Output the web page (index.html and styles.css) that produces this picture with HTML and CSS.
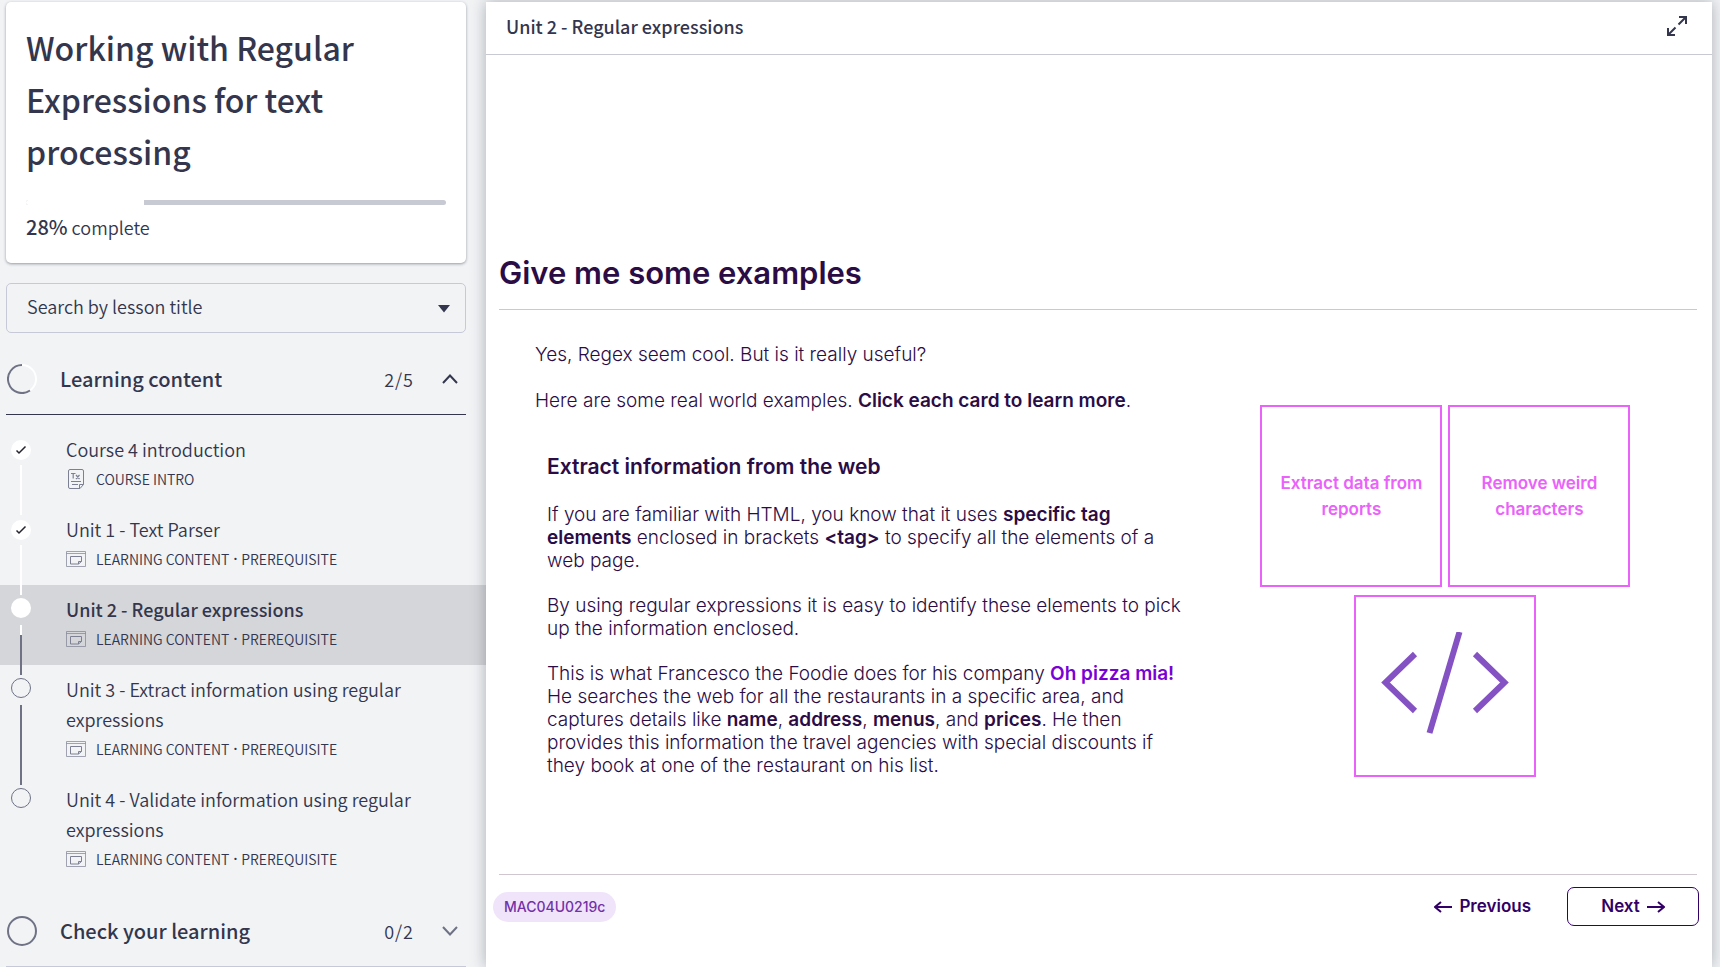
FILE: index.html
```html
<!DOCTYPE html>
<html lang="en">
<head>
<meta charset="utf-8">
<meta name="viewport" content="width=device-width, initial-scale=1">
<title>Working with Regular Expressions for text processing</title>
<link rel="stylesheet" href="styles.css">
</head>
<body>
<svg class="sprite" aria-hidden="true">
  <symbol id="window" viewBox="0 0 20 20">
    <g fill="none" stroke="currentColor"><path d="M.5 2.500h19v15H.5zM.5 4.500h19" opacity=".7"/><path d="M4.500 7.500h11v5l-3 2.500h-8zM12.500 15v-2.500h3"/></g>
  </symbol>
  <symbol id="check" viewBox="0 0 20 20"><path d="M5.500 10.500l2.500 2.500 6.500-6.500" fill="none" stroke="#23242e" stroke-width="1.500"/></symbol>
</svg>
<div class="app">
  <aside class="sidebar">
    <section class="course">
      <h1 class="course-title">Working with Regular Expressions for text processing</h1>
      <div class="progress" role="progressbar" aria-label="Course progress" aria-valuenow="28" aria-valuemin="0" aria-valuemax="100"><div class="progress-done" style="width:28%"></div></div>
      <p class="progress-text"><b>28%</b> complete</p>
    </section>

    <div class="search">
      <select class="search-select" aria-label="Search by lesson title"><option>Search by lesson title</option></select>
      <svg class="search-caret" viewBox="0 0 12 8" aria-hidden="true"><path d="M0 0h12L6 7.500z" fill="#33364d"/></svg>
    </div>

    <button class="section open" type="button" aria-expanded="true">
      <svg class="ring" viewBox="0 0 30 30" aria-hidden="true"><circle cx="15" cy="15" r="14" fill="none" stroke="#fff" stroke-width="2"/><path d="M23 26.500A14 14 0 1 1 15 1" fill="none" stroke="#6f7285" stroke-width="2"/></svg>
      <span class="section-name">Learning content</span>
      <span class="section-count">2/5</span>
      <svg class="chevron" viewBox="0 0 16 16" aria-hidden="true"><path d="M1 12l7-7.500 7 7.500" fill="none" stroke="#33364d" stroke-width="2"/></svg>
    </button>

    <ol class="lessons">
      <li class="lesson">
        <span class="rail done"><svg class="dot"><use href="#check"/></svg><i class="line white"></i></span>
        <div class="lesson-body">
          <a class="lesson-title" href="#intro">Course 4 introduction</a>
          <p class="meta"><svg class="meta-icon" viewBox="0 0 20 20" aria-hidden="true"><g fill="none" stroke="currentColor"><path d="M4 .5h12q1.500 0 1.500 1.500v13.500l-3.500 4H4q-1.500 0-1.500-1.500V2Q2.500.5 4 .5zM13.500 19.500v-4h4"/><path d="M5 12.500h10M6 15.500h6M5 4.500h4.500M7.200 4.500v5M10 6l3.500 4M13.500 6L10 10" stroke-width="1.200"/></g></svg>COURSE INTRO</p>
        </div>
      </li>
      <li class="lesson">
        <span class="rail done"><svg class="dot"><use href="#check"/></svg><i class="line white"></i></span>
        <div class="lesson-body">
          <a class="lesson-title" href="#unit1">Unit 1 - Text Parser</a>
          <p class="meta"><svg class="meta-icon"><use href="#window"/></svg>LEARNING CONTENT<span class="sep">·</span>PREREQUISITE</p>
        </div>
      </li>
      <li class="lesson current">
        <span class="rail"><i class="dot"></i><i class="line part"></i></span>
        <div class="lesson-body">
          <a class="lesson-title" href="#unit2" aria-current="page">Unit 2 - Regular expressions</a>
          <p class="meta"><svg class="meta-icon"><use href="#window"/></svg>LEARNING CONTENT<span class="sep">·</span>PREREQUISITE</p>
        </div>
      </li>
      <li class="lesson">
        <span class="rail todo"><i class="dot"></i><i class="line"></i></span>
        <div class="lesson-body">
          <a class="lesson-title" href="#unit3">Unit 3 - Extract information using regular expressions</a>
          <p class="meta"><svg class="meta-icon"><use href="#window"/></svg>LEARNING CONTENT<span class="sep">·</span>PREREQUISITE</p>
        </div>
      </li>
      <li class="lesson">
        <span class="rail todo"><i class="dot"></i></span>
        <div class="lesson-body">
          <a class="lesson-title" href="#unit4">Unit 4 - Validate information using regular expressions</a>
          <p class="meta"><svg class="meta-icon"><use href="#window"/></svg>LEARNING CONTENT<span class="sep">·</span>PREREQUISITE</p>
        </div>
      </li>
    </ol>

    <button class="section" type="button" aria-expanded="false">
      <svg class="ring" viewBox="0 0 30 30" aria-hidden="true"><circle cx="15" cy="15" r="14" fill="none" stroke="#6f7285" stroke-width="2"/></svg>
      <span class="section-name">Check your learning</span>
      <span class="section-count">0/2</span>
      <svg class="chevron" viewBox="0 0 16 16" aria-hidden="true"><path d="M1 4l7 7.500L15 4" fill="none" stroke="#6f7285" stroke-width="2"/></svg>
    </button>
  </aside>

  <main class="player">
    <header class="player-bar">
      <h2 class="player-title">Unit 2 - Regular expressions</h2>
      <button class="expand" type="button" aria-label="Full screen"><svg viewBox="0 0 20 20" aria-hidden="true"><path d="M12 1h7v7M18.500 1.500l-7 7M8 19H1v-7M1.500 18.500l7-7" fill="none" stroke="#33364d" stroke-width="2"/></svg></button>
    </header>
    <article class="slide">
      <h2 class="slide-title">Give me some examples</h2>
      <div class="columns">
        <div class="copy">
          <p>Yes, Regex seem cool. But is it really useful?</p>
          <p>Here are some real world examples. <b>Click each card to learn more</b>.</p>
          <section class="detail">
            <h3 class="detail-title">Extract information from the web</h3>
            <p>If you are familiar with HTML, you know that it uses <b>specific tag elements</b> enclosed in brackets <b>&lt;tag&gt;</b> to specify all the elements of a web page.</p>
            <p>By using regular expressions it is easy to identify these elements to pick up the information enclosed.</p>
            <p>This is what Francesco the Foodie does for his company <b class="brand">Oh pizza mia!</b> He searches the web for all the restaurants in a specific area, and captures details like <b>name</b>, <b>address</b>, <b>menus</b>, and <b>prices</b>. He then provides this information the travel agencies with special discounts if they book at one of the restaurant on his list.</p>
          </section>
        </div>
        <div class="cards">
          <button class="card" type="button">Extract data from reports</button>
          <button class="card" type="button">Remove weird characters</button>
          <button class="card" type="button" aria-label="Extract information from the web"><svg class="code" viewBox="0 0 128 108" aria-hidden="true"><path d="M34 22L4.500 50.500 34 79M78.500 0L48.500 101M94 22l29.500 28.500L94 79" fill="none" stroke="#8552c4" stroke-width="6"/></svg></button>
        </div>
      </div>
      <footer class="slide-footer">
        <span class="code-tag">MAC04U0219c</span>
        <nav class="pager">
          <button class="previous" type="button"><svg class="arrow" viewBox="0 0 18 12" aria-hidden="true"><path d="M18 6H1M7 1L1 6l6 5" fill="none" stroke="currentColor" stroke-width="2"/></svg>Previous</button>
          <button class="next" type="button">Next<svg class="arrow" viewBox="0 0 18 12" aria-hidden="true"><path d="M0 6h17M11 1l6 5-6 5" fill="none" stroke="currentColor" stroke-width="2"/></svg></button>
        </nav>
      </footer>
    </article>
  </main>
</div>
</body>
</html>
```

FILE: styles.css
```css
* { box-sizing: border-box; }
body {
  margin: 0;
  background: #f1f3f5;
  color: #33364d;
  font-family: "Noto Sans CJK SC", "Noto Sans", sans-serif;
  font-size: 18px;
  font-weight: 350;
}
h1, h2, h3, p, ol { margin: 0; padding: 0; }
button { border: 0; padding: 0; background: none; color: inherit; font: inherit; cursor: pointer; }
a { color: inherit; text-decoration: none; }
.sprite { display: none; }
.app { display: flex; min-height: 100vh; padding: 2px 8px 0 0; overflow: hidden; }

.sidebar { flex: 0 0 486px; display: flex; flex-direction: column; }
.course {
  margin: 0 20px 20px 6px;
  padding: 19px 20px 21px;
  border-radius: 5px;
  background: #fff;
  box-shadow: 0 1px 3px rgba(40, 45, 60, .45);
}
.course-title { font-size: 32px; line-height: 52px; font-weight: 500; }
.progress { height: 5px; margin-top: 23px; border-radius: 3px; background: #c7c9d3; overflow: hidden; }
.progress-done { height: 5px; background: #fff; }
.progress-text { margin-top: 7px; line-height: 30px; }
.progress-text b { font-size: 20px; font-weight: 500; }

.search { position: relative; margin: 0 20px 12px 6px; }
.search-select {
  display: block;
  width: 100%;
  height: 50px;
  padding: 0 20px 4px;
  border: 1px solid #c7c9d8;
  border-radius: 5px;
  background: transparent;
  color: inherit;
  font: inherit;
  appearance: none;
}
.search-caret { position: absolute; right: 16px; top: 22px; width: 12px; height: 8px; }

.section {
  display: flex;
  align-items: center;
  height: 70px;
  margin: 0 20px 0 6px;
  padding: 0 8px 2px 1px;
  border-bottom: 1px solid #c7c9d8;
  text-align: left;
}
.section.open { border-color: #33364d; }
.ring { width: 30px; height: 30px; margin-right: 23px; }
.section-name { flex: 1; font-size: 20px; font-weight: 500; }
.section-count { letter-spacing: 1px; }
.chevron { width: 16px; height: 16px; margin-left: 28px; }

.lessons { list-style: none; padding: 10px 0 12px; }
.lesson { display: flex; padding: 0 20px 0 11px; }
.lesson.current { background: #d5d6da; }
.rail {
  position: relative;
  z-index: 1;
  flex: 0 0 20px;
  display: flex;
  flex-direction: column;
  align-items: center;
  gap: 7px;
  margin-bottom: -10px;
  padding-top: 13px;
}
.rail.done { gap: 5px; padding-top: 15px; }
.dot { flex: none; width: 20px; height: 20px; border-radius: 50%; background: #fff; }
.todo .dot { border: 1px solid #6f7285; background: transparent; }
.line { flex: 1; width: 2px; background: #6f7285; }
.line.white { background: #fff; }
.line.part { background: linear-gradient(#fff 10px, #6f7285 10px); }
.lesson-body { flex: 1; padding: 9px 0 11px 35px; line-height: 30px; }
.current .lesson-title { font-weight: 500; }
.lesson-title { display: block; }
.meta { display: flex; align-items: center; font-size: 14px; line-height: 30px; }
.meta-icon { width: 20px; height: 20px; margin-right: 10px; color: #7d8092; }
.sep { margin: 0 4px; font-family: "Noto Sans", sans-serif; font-weight: 600; }

.player { position: relative; flex: 1; min-width: 0; background: #fff; box-shadow: 0 0 14px rgba(40, 45, 60, .35); }
.player-bar {
  display: flex;
  align-items: center;
  justify-content: space-between;
  height: 53px;
  padding: 0 25px 4px 20px;
  border-bottom: 1px solid #c7c9d3;
}
.player-title { font-size: 18px; font-weight: 500; }
.expand { width: 20px; height: 20px; }
.expand svg { display: block; }

.slide { padding: 196px 15px 0 13px; color: #2b0c45; font-family: Inter, sans-serif; font-size: 19px; font-weight: 300; line-height: 23px; }
.slide b { font-weight: 600; }
.slide-title { padding-bottom: 14px; border-bottom: 1px solid #cfc6cf; font-size: 31px; line-height: 44px; font-weight: 600; }
.columns { display: grid; grid-template-columns: 58fr 42fr; align-items: end; padding: 33px 0 97px; }
.copy { padding: 0 8px 0 36px; }
.copy p + p { margin-top: 23px; }
.detail { padding: 42px 0 0 12px; }
.detail-title { margin-bottom: 23px; font-size: 21px; line-height: 26px; font-weight: 600; }
.copy .detail p + p { margin-top: 22px; }
.detail .brand { color: #7a00d6; }
.cards { display: flex; flex-wrap: wrap; justify-content: center; gap: 8px 6px; padding: 0 60px; }
.card {
  display: grid;
  place-items: center;
  width: 182px;
  height: 182px;
  padding: 0 10px;
  border: 2px solid #ea62fa;
  color: #ea62fa;
  font-size: 17px;
  line-height: 26px;
  font-weight: 600;
}
.code { width: 128px; height: 108px; }

.slide-footer { display: flex; align-items: center; justify-content: space-between; padding-top: 12px; border-top: 1px solid #cfc6cf; }
.code-tag { margin-left: -6px; padding: 0 11px; border-radius: 15px; background: #f0e4fa; color: #7331a8; font-size: 14px; line-height: 30px; font-weight: 500; }
.pager { display: flex; gap: 36px; margin-right: -2px; color: #330066; font-size: 17px; font-weight: 600; }
.pager button { display: flex; align-items: center; justify-content: center; gap: 7px; }
.pager .next { width: 132px; height: 39px; border: 1px solid #330066; border-radius: 7px; }
.arrow { width: 18px; height: 12px; }
```
